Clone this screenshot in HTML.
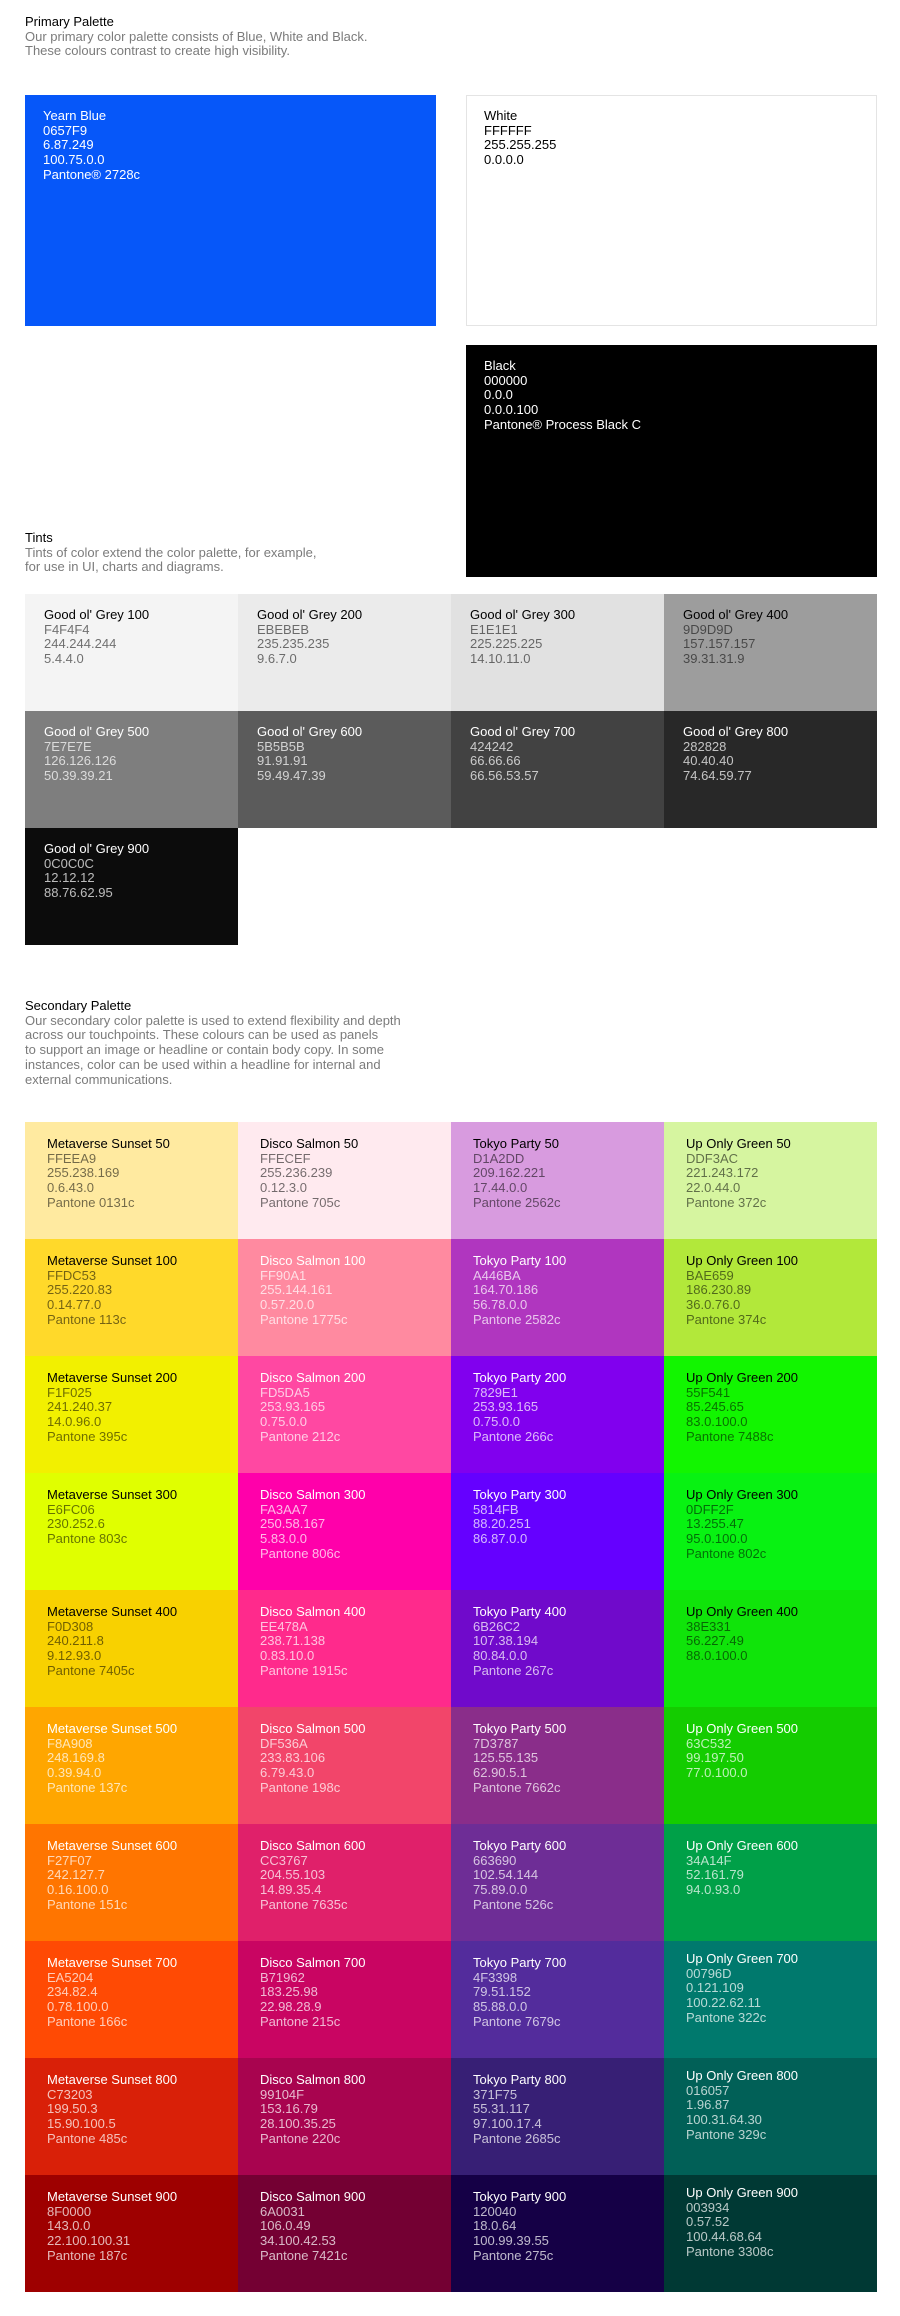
<!DOCTYPE html>
<html><head><meta charset="utf-8"><style>
*{margin:0;padding:0;box-sizing:border-box}
body{width:900px;height:2316px;background:#fff;font-family:"Liberation Sans",sans-serif;font-size:13px;line-height:14.7px;position:relative;overflow:hidden}
.h{position:absolute;left:25px;color:#000}
.h p{color:#7b7b7b}
.box{position:absolute;padding:14px 18px}
.grid{position:absolute;left:25px;width:852px;display:grid;grid-template-columns:repeat(4,213px)}
.grid div{height:117px;padding:14px 19px}
.sec div{padding:15px 22px}
.d{color:#000}.d span{color:rgba(0,0,0,.55)}
.w{color:#fff}.w span{color:rgba(255,255,255,.72)}
span{display:block}
</style></head><body>
<div class="h" style="top:15px">Primary Palette<p>Our primary color palette consists of Blue, White and Black.<br>These colours contrast to create high visibility.</p></div>

<div class="box w" style="left:25px;top:95px;width:411px;height:231px;background:#0657F9;color:#fff">Yearn Blue<br>0657F9<br>6.87.249<br>100.75.0.0<br>Pantone® 2728c</div>
<div class="box" style="left:466px;top:95px;width:411px;height:231px;background:#fff;border:1px solid #e4e4e4;padding:13px 17px">White<br>FFFFFF<br>255.255.255<br>0.0.0.0</div>
<div class="box" style="left:466px;top:345px;width:411px;height:232px;background:#000;color:#fff">Black<br>000000<br>0.0.0<br>0.0.0.100<br>Pantone® Process Black C</div>

<div class="h" style="top:531px">Tints<p>Tints of color extend the color palette, for example,<br>for use in UI, charts and diagrams.</p></div>

<div class="grid" style="top:594px">
<div class="d" style="background:#F4F4F4">Good ol' Grey 100<span>F4F4F4<br>244.244.244<br>5.4.4.0</span></div>
<div class="d" style="background:#EBEBEB">Good ol' Grey 200<span>EBEBEB<br>235.235.235<br>9.6.7.0</span></div>
<div class="d" style="background:#E1E1E1">Good ol' Grey 300<span>E1E1E1<br>225.225.225<br>14.10.11.0</span></div>
<div class="d" style="background:#9D9D9D">Good ol' Grey 400<span>9D9D9D<br>157.157.157<br>39.31.31.9</span></div>
<div class="w" style="background:#7E7E7E">Good ol' Grey 500<span>7E7E7E<br>126.126.126<br>50.39.39.21</span></div>
<div class="w" style="background:#5B5B5B">Good ol' Grey 600<span>5B5B5B<br>91.91.91<br>59.49.47.39</span></div>
<div class="w" style="background:#424242">Good ol' Grey 700<span>424242<br>66.66.66<br>66.56.53.57</span></div>
<div class="w" style="background:#282828">Good ol' Grey 800<span>282828<br>40.40.40<br>74.64.59.77</span></div>
<div class="w" style="background:#0C0C0C">Good ol' Grey 900<span>0C0C0C<br>12.12.12<br>88.76.62.95</span></div>
</div>

<div class="h" style="top:999px">Secondary Palette<p>Our secondary color palette is used to extend flexibility and depth<br>across our touchpoints. These colours can be used as panels<br>to support an image or headline or contain body copy. In some<br>instances, color can be used within a headline for internal and<br>external communications.</p></div>

<div class="grid sec" style="top:1122px">
<div class="d" style="background:#FFEAA0">Metaverse Sunset 50<span>FFEEA9<br>255.238.169<br>0.6.43.0<br>Pantone 0131c</span></div>
<div class="d" style="background:#FFEAEF">Disco Salmon 50<span>FFECEF<br>255.236.239<br>0.12.3.0<br>Pantone 705c</span></div>
<div class="d" style="background:#D89BDF">Tokyo Party 50<span>D1A2DD<br>209.162.221<br>17.44.0.0<br>Pantone 2562c</span></div>
<div class="d" style="background:#D6F5A0">Up Only Green 50<span>DDF3AC<br>221.243.172<br>22.0.44.0<br>Pantone 372c</span></div>

<div class="d" style="background:#FFD92A">Metaverse Sunset 100<span>FFDC53<br>255.220.83<br>0.14.77.0<br>Pantone 113c</span></div>
<div class="w" style="background:#FF8AA0">Disco Salmon 100<span>FF90A1<br>255.144.161<br>0.57.20.0<br>Pantone 1775c</span></div>
<div class="w" style="background:#B036BF">Tokyo Party 100<span>A446BA<br>164.70.186<br>56.78.0.0<br>Pantone 2582c</span></div>
<div class="d" style="background:#B2E83A">Up Only Green 100<span>BAE659<br>186.230.89<br>36.0.76.0<br>Pantone 374c</span></div>

<div class="d" style="background:#F2F000">Metaverse Sunset 200<span>F1F025<br>241.240.37<br>14.0.96.0<br>Pantone 395c</span></div>
<div class="w" style="background:#FF48A2">Disco Salmon 200<span>FD5DA5<br>253.93.165<br>0.75.0.0<br>Pantone 212c</span></div>
<div class="w" style="background:#8100EE">Tokyo Party 200<span>7829E1<br>253.93.165<br>0.75.0.0<br>Pantone 266c</span></div>
<div class="d" style="background:#12F500">Up Only Green 200<span>55F541<br>85.245.65<br>83.0.100.0<br>Pantone 7488c</span></div>

<div class="d" style="background:#E0FF00">Metaverse Sunset 300<span>E6FC06<br>230.252.6<br>Pantone 803c</span></div>
<div class="w" style="background:#FF00AA">Disco Salmon 300<span>FA3AA7<br>250.58.167<br>5.83.0.0<br>Pantone 806c</span></div>
<div class="w" style="background:#6500FF">Tokyo Party 300<span>5814FB<br>88.20.251<br>86.87.0.0</span></div>
<div class="d" style="background:#08F212">Up Only Green 300<span>0DFF2F<br>13.255.47<br>95.0.100.0<br>Pantone 802c</span></div>

<div class="d" style="background:#F8D100">Metaverse Sunset 400<span>F0D308<br>240.211.8<br>9.12.93.0<br>Pantone 7405c</span></div>
<div class="w" style="background:#FF2A8C">Disco Salmon 400<span>EE478A<br>238.71.138<br>0.83.10.0<br>Pantone 1915c</span></div>
<div class="w" style="background:#700ACB">Tokyo Party 400<span>6B26C2<br>107.38.194<br>80.84.0.0<br>Pantone 267c</span></div>
<div class="d" style="background:#10E40A">Up Only Green 400<span>38E331<br>56.227.49<br>88.0.100.0</span></div>

<div class="w" style="background:#FFA600">Metaverse Sunset 500<span>F8A908<br>248.169.8<br>0.39.94.0<br>Pantone 137c</span></div>
<div class="w" style="background:#F2456A">Disco Salmon 500<span>DF536A<br>233.83.106<br>6.79.43.0<br>Pantone 198c</span></div>
<div class="w" style="background:#8A2D8A">Tokyo Party 500<span>7D3787<br>125.55.135<br>62.90.5.1<br>Pantone 7662c</span></div>
<div class="w" style="background:#14CC00">Up Only Green 500<span>63C532<br>99.197.50<br>77.0.100.0</span></div>

<div class="w" style="background:#FF7500">Metaverse Sunset 600<span>F27F07<br>242.127.7<br>0.16.100.0<br>Pantone 151c</span></div>
<div class="w" style="background:#E0206A">Disco Salmon 600<span>CC3767<br>204.55.103<br>14.89.35.4<br>Pantone 7635c</span></div>
<div class="w" style="background:#6E2D96">Tokyo Party 600<span>663690<br>102.54.144<br>75.89.0.0<br>Pantone 526c</span></div>
<div class="w" style="background:#00A048">Up Only Green 600<span>34A14F<br>52.161.79<br>94.0.93.0</span></div>

<div class="w" style="background:#FF4A04">Metaverse Sunset 700<span>EA5204<br>234.82.4<br>0.78.100.0<br>Pantone 166c</span></div>
<div class="w" style="background:#C90562">Disco Salmon 700<span>B71962<br>183.25.98<br>22.98.28.9<br>Pantone 215c</span></div>
<div class="w" style="background:#532C9C">Tokyo Party 700<span>4F3398<br>79.51.152<br>85.88.0.0<br>Pantone 7679c</span></div>
<div class="w" style="background:#00796D;padding-top:11px">Up Only Green 700<span>00796D<br>0.121.109<br>100.22.62.11<br>Pantone 322c</span></div>

<div class="w" style="background:#D92008">Metaverse Sunset 800<span>C73203<br>199.50.3<br>15.90.100.5<br>Pantone 485c</span></div>
<div class="w" style="background:#A8044F">Disco Salmon 800<span>99104F<br>153.16.79<br>28.100.35.25<br>Pantone 220c</span></div>
<div class="w" style="background:#371F75">Tokyo Party 800<span>371F75<br>55.31.117<br>97.100.17.4<br>Pantone 2685c</span></div>
<div class="w" style="background:#016057;padding-top:11px">Up Only Green 800<span>016057<br>1.96.87<br>100.31.64.30<br>Pantone 329c</span></div>

<div class="w" style="background:#9E0000">Metaverse Sunset 900<span>8F0000<br>143.0.0<br>22.100.100.31<br>Pantone 187c</span></div>
<div class="w" style="background:#740033">Disco Salmon 900<span>6A0031<br>106.0.49<br>34.100.42.53<br>Pantone 7421c</span></div>
<div class="w" style="background:#150046">Tokyo Party 900<span>120040<br>18.0.64<br>100.99.39.55<br>Pantone 275c</span></div>
<div class="w" style="background:#003934;padding-top:11px">Up Only Green 900<span>003934<br>0.57.52<br>100.44.68.64<br>Pantone 3308c</span></div>
</div>
</body></html>
